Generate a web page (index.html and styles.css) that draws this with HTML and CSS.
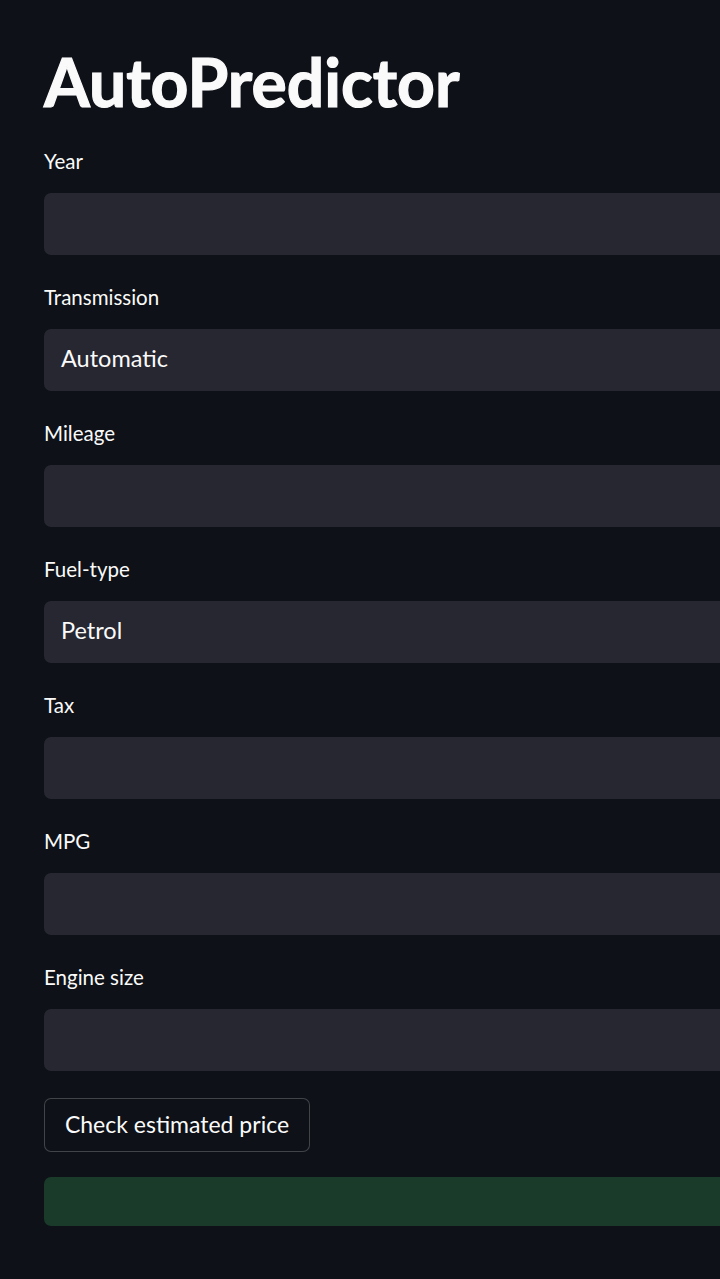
FILE: index.html
```html
<!DOCTYPE html>
<html>
<head>
<meta charset="utf-8">
<link rel="stylesheet" href="styles.css">
</head>
<body>
<div class="app">
  <h1 class="title">AutoPredictor</h1>
  <div class="form">
    <div class="group">
      <label class="label">Year</label>
      <div class="field"></div>
    </div>
    <div class="group">
      <label class="label">Transmission</label>
      <div class="field select">Automatic</div>
    </div>
    <div class="group">
      <label class="label">Mileage</label>
      <div class="field"></div>
    </div>
    <div class="group">
      <label class="label">Fuel-type</label>
      <div class="field select">Petrol</div>
    </div>
    <div class="group">
      <label class="label">Tax</label>
      <div class="field"></div>
    </div>
    <div class="group">
      <label class="label">MPG</label>
      <div class="field"></div>
    </div>
    <div class="group">
      <label class="label">Engine size</label>
      <div class="field"></div>
    </div>
  </div>
  <button class="btn">Check estimated price</button>
  <div class="success"></div>
</div>
</body>
</html>
```
FILE: styles.css
```css
html, body {
  margin: 0;
  padding: 0;
  background: #0e1117;
  overflow: hidden;
}
body {
  width: 720px;
  height: 1279px;
  font-family: Lato, "Open Sans", sans-serif;
  color: #fafafa;
}
.app {
  padding-left: 44px;
  display: flex;
  flex-direction: column;
  overflow: hidden;
}
.title {
  margin: 0;
  padding-top: 42px;
  font-size: 66px;
  line-height: 80px;
  font-weight: 700;
  letter-spacing: 0;
  -webkit-text-stroke: 1.2px #fafafa;
  height: 107px;
}
.form {
  display: flex;
  flex-direction: column;
  gap: 30px;
}
.group {
  display: flex;
  flex-direction: column;
  gap: 20px;
}
.label {
  font-size: 20.5px;
  line-height: 24px;
  height: 24px;
}
.field {
  height: 62px;
  width: 720px;
  background: #262730;
  border-radius: 7px;
  box-sizing: border-box;
  padding-left: 17px;
  padding-bottom: 4px;
  display: flex;
  align-items: center;
  font-size: 23.5px;
}
.btn {
  align-self: flex-start;
  margin-top: 27px;
  height: 54px;
  width: 266px;
  background: #0e1117;
  border: 1px solid rgba(250,250,250,0.22);
  border-radius: 7px;
  color: #fafafa;
  font-family: inherit;
  font-size: 23px;
  padding: 0 0 3px 0;
}
.success {
  margin-top: 25px;
  height: 49px;
  width: 720px;
  background: #1a3a2a;
  border-radius: 7px;
}
```
